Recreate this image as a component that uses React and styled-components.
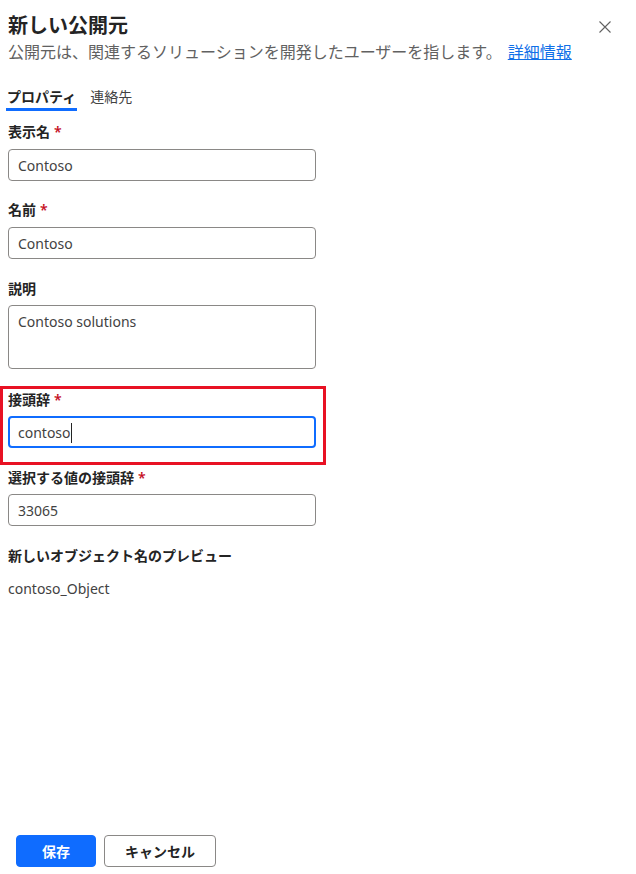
import React from 'react';
import styled, {createGlobalStyle} from 'styled-components';

const GlobalStyle = createGlobalStyle`
    body {
        margin: 0;
        background: #ffffff;
        font-family: "Noto Sans", "Noto Sans CJK JP", sans-serif;
        color: #242424;
    }
`;

const Panel = styled.div`
    display: flex;
    flex-direction: column;
    height: 874px;
    box-sizing: border-box;
    padding: 12px 0 7px 8px;
`;

const Header = styled.div`
    display: flex;
    justify-content: space-between;
    align-items: center;
    padding-right: 24px;
`;

const Title = styled.h1`
    margin: 0;
    font-size: 20px;
    line-height: 28px;
    font-weight: 700;
    color: #242424;
`;

const CloseBtn = styled.div`
    width: 14px;
    height: 14px;
    display: flex;
    align-items: center;
    justify-content: center;
    margin-top: 2px;
`;

const Subtitle = styled.p`
    margin: 2px 0 0;
    font-size: 16px;
    line-height: 20px;
    color: #616161;
`;

const Link = styled.a`
    color: #1170e8;
    text-decoration: underline;
    margin-left: 6px;
`;

const Tabs = styled.div`
    display: flex;
    gap: 12px;
    margin-top: 25px;
`;

const Tab = styled.div`
    font-size: 14px;
    line-height: 20px;
    padding: 0 1px 1px;
    color: ${p => (p.$active ? '#242424' : '#424242')};
    font-weight: ${p => (p.$active ? 600 : 400)};
    border-bottom: 3px solid ${p => (p.$active ? '#0f6cff' : 'transparent')};
    margin-left: ${p => (p.$active ? '-2px' : '0')};
`;

const Field = styled.div`
    display: flex;
    flex-direction: column;
    gap: ${p => p.$gap || 7}px;
    margin-top: ${p => p.$top}px;
`;

const Highlight = styled.div`
    margin: 17px 0 0 -8px;
    width: 326px;
    box-sizing: border-box;
    border: 3px solid #e81123;
    padding: 1px 0 14px 5px;
`;

const Label = styled.div`
    font-size: 14px;
    line-height: 20px;
    font-weight: 600;
    color: #242424;
`;

const Star = styled.span`
    color: #c50f1f;
    margin-left: 4px;
`;

const Box = styled.div`
    width: 308px;
    height: ${p => p.$h || 32}px;
    box-sizing: border-box;
    border: ${p => (p.$focus ? '2px solid #0f6cff' : '1px solid #8a8886')};
    border-radius: 4px;
    padding: ${p => (p.$focus ? '5px 8px' : '6px 9px')};
    font-size: 14px;
    line-height: 20px;
    color: #424242;
    display: flex;
    align-items: flex-start;
`;

const Caret = styled.span`
    display: inline-block;
    width: 1px;
    height: 20px;
    background: #242424;
`;

const Preview = styled.div`
    font-size: 14px;
    line-height: 20px;
    color: #424242;
    margin-top: 13px;
`;

const Footer = styled.div`
    margin-top: auto;
    display: flex;
    gap: 8px;
    padding-left: 8px;
`;

const Button = styled.button`
    height: 32px;
    width: ${p => (p.$primary ? 80 : 112)}px;
    border-radius: 4px;
    font-family: "Noto Sans CJK JP", sans-serif;
    font-size: 14px;
    font-weight: 700;
    background: ${p => (p.$primary ? '#0f6cff' : '#ffffff')};
    color: ${p => (p.$primary ? '#ffffff' : '#242424')};
    border: 1px solid ${p => (p.$primary ? '#0f6cff' : '#8a8886')};
    padding: 0;
`;

function Close() {
    return (
        <svg width="12" height="12" viewBox="0 0 12 12">
            <path d="M0.5 0.5 L11.5 11.5 M11.5 0.5 L0.5 11.5" stroke="#616161" strokeWidth="1.1" />
        </svg>
    );
}

export default function App() {
    return (
        <>
            <GlobalStyle />
            <Panel>
                <Header>
                    <Title>新しい公開元</Title>
                    <CloseBtn><Close /></CloseBtn>
                </Header>
                <Subtitle>
                    公開元は、関連するソリューションを開発したユーザーを指します。<Link>詳細情報</Link>
                </Subtitle>
                <Tabs>
                    <Tab $active>プロパティ</Tab>
                    <Tab>連絡先</Tab>
                </Tabs>

                <Field $top={11}>
                    <Label>表示名<Star>*</Star></Label>
                    <Box>Contoso</Box>
                </Field>
                <Field $top={19}>
                    <Label>名前<Star>*</Star></Label>
                    <Box>Contoso</Box>
                </Field>
                <Field $top={20} $gap={6}>
                    <Label>説明</Label>
                    <Box $h={64}>Contoso solutions</Box>
                </Field>
                <Highlight>
                    <Field $top={0} $gap={6}>
                        <Label>接頭辞<Star>*</Star></Label>
                        <Box $focus>contoso<Caret /></Box>
                    </Field>
                </Highlight>
                <Field $top={3} $gap={6}>
                    <Label>選択する値の接頭辞<Star>*</Star></Label>
                    <Box>33065</Box>
                </Field>
                <Field $top={20}>
                    <Label>新しいオブジェクト名のプレビュー</Label>
                </Field>
                <Preview>contoso_Object</Preview>

                <Footer>
                    <Button $primary>保存</Button>
                    <Button>キャンセル</Button>
                </Footer>
            </Panel>
        </>
    );
}
